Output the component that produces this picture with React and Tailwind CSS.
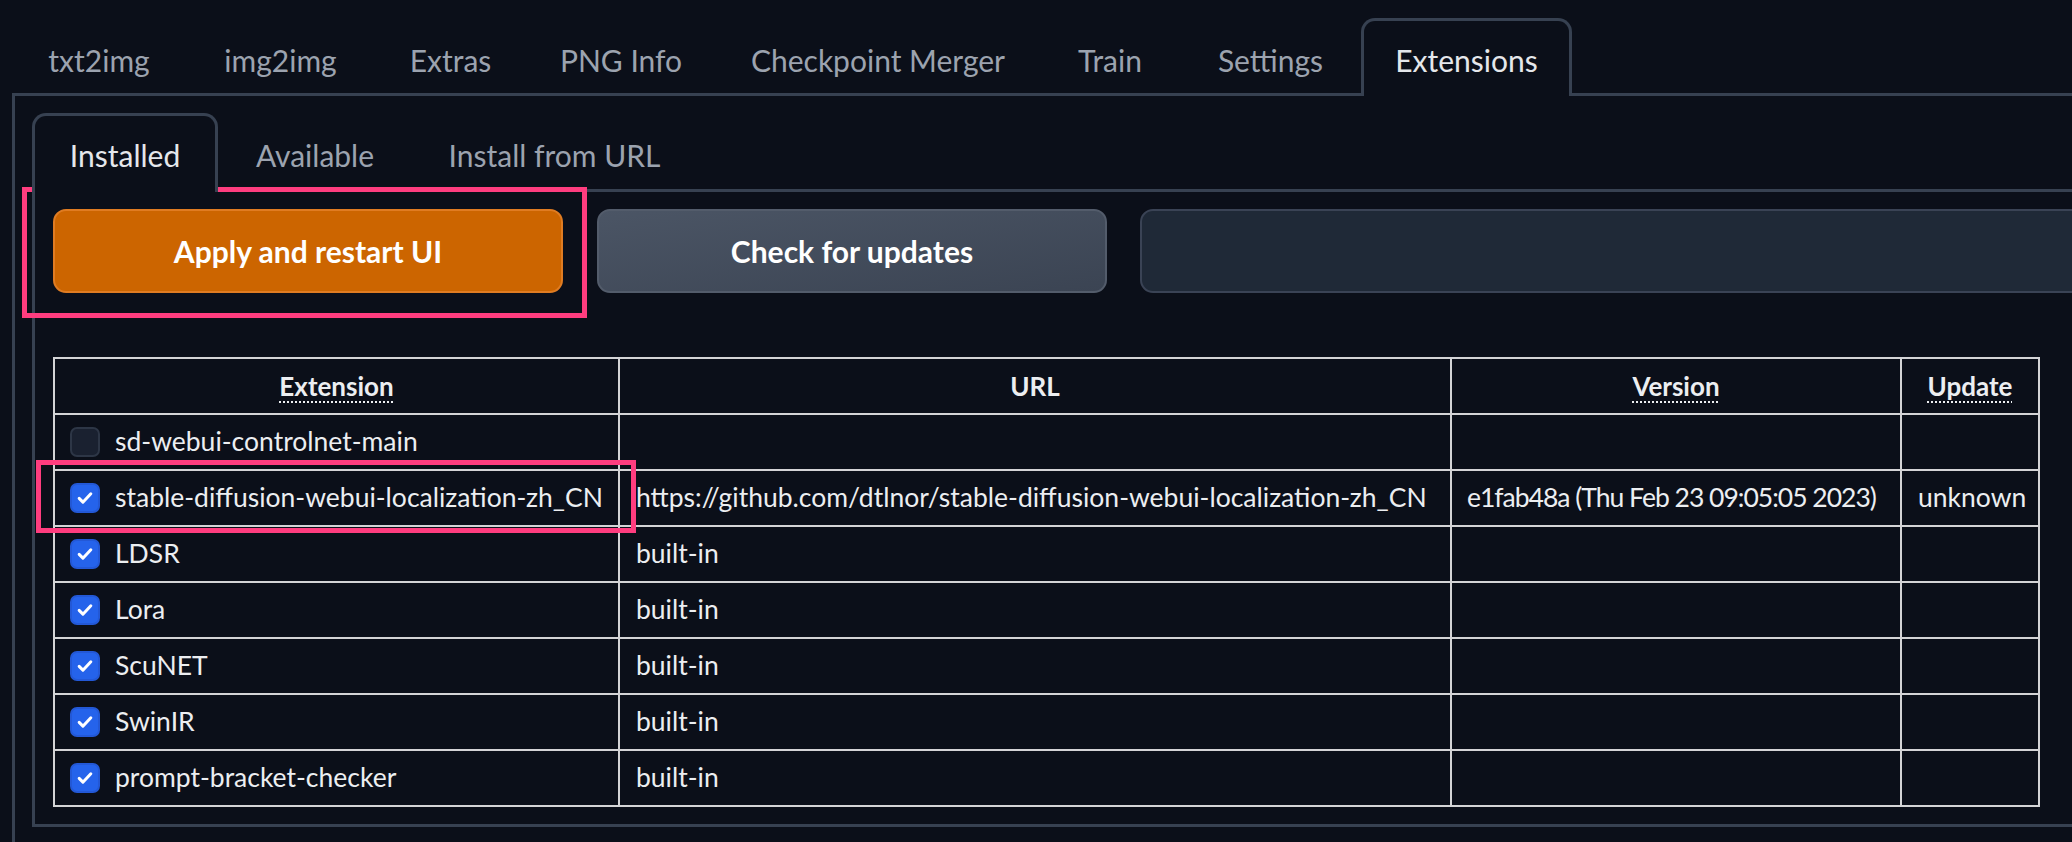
import clsx from "clsx";

const topTabs = [
  { label: "txt2img", w: "w-[174px]" },
  { label: "img2img", w: "w-[189px]" },
  { label: "Extras", w: "w-[151px]" },
  { label: "PNG Info", w: "w-[190px]" },
  { label: "Checkpoint Merger", w: "w-[324px]" },
  { label: "Train", w: "w-[140px]" },
  { label: "Settings", w: "w-[181px]" },
  { label: "Extensions", w: "w-[211px]", active: true },
];

const subTabs = [
  { label: "Installed", w: "w-[186px]", active: true },
  { label: "Available", w: "w-[194px]" },
  { label: "Install from URL", w: "w-[285px]" },
];

const rows = [
  { name: "sd-webui-controlnet-main", url: "", version: "", update: "", checked: false },
  {
    name: "stable-diffusion-webui-localization-zh_CN",
    url: "https://github.com/dtlnor/stable-diffusion-webui-localization-zh_CN",
    version: "e1fab48a (Thu Feb 23 09:05:05 2023)",
    update: "unknown",
    checked: true,
  },
  { name: "LDSR", url: "built-in", version: "", update: "", checked: true },
  { name: "Lora", url: "built-in", version: "", update: "", checked: true },
  { name: "ScuNET", url: "built-in", version: "", update: "", checked: true },
  { name: "SwinIR", url: "built-in", version: "", update: "", checked: true },
  { name: "prompt-bracket-checker", url: "built-in", version: "", update: "", checked: true },
];

function Checkbox({ checked }) {
  if (!checked) {
    return <span className="w-[30px] h-[30px] shrink-0 rounded-[7px] bg-[#1a2130] border-2 border-[#2d3646]" />;
  }
  return (
    <span className="w-[30px] h-[30px] shrink-0 rounded-[7px] bg-[#2563eb] border-2 border-[#2358d6] flex items-center justify-center">
      <svg viewBox="0 0 24 24" className="w-[20px] h-[20px]" fill="none" stroke="white" strokeWidth={3.6} strokeLinecap="round" strokeLinejoin="round">
        <path d="M5 12.5l4.5 4.5L19 7" />
      </svg>
    </span>
  );
}

function Tab({ label, w, active, h }) {
  return (
    <div
      className={clsx(
        "flex items-center justify-center border-[3px] border-b-0 rounded-t-[14px] text-[30px] pt-[3px]",
        w,
        h,
        active ? "border-[#374151] bg-[#0b0f19] text-[#e5e7eb]" : "border-transparent text-[#9ca3af]"
      )}
    >
      {label}
    </div>
  );
}

export default function App() {
  return (
    <div className="relative w-[2072px] h-[842px] overflow-hidden bg-[#0b0f19] font-[Lato,sans-serif] text-[#eceef1]">
      <div className="w-[2300px] pt-[18px] pl-[12px]">
        {/* top tabs */}
        <div className="relative z-10 flex">
          {topTabs.map((t) => (
            <Tab key={t.label} {...t} h="h-[78px]" />
          ))}
        </div>

        <div className="-mt-[3px] border-[3px] border-[#374151] pt-[17px] pl-[17px] pb-[40px]">
          {/* sub tabs */}
          <div className="relative z-10 flex">
            {subTabs.map((t) => (
              <Tab key={t.label} {...t} h="h-[79px]" />
            ))}
          </div>

          <div className="-mt-[3px] border-[3px] border-[#374151] pt-[17px] pl-[18px] pb-[17px]">
            {/* buttons row */}
            <div className="flex h-[84px]">
              <button className="w-[510px] rounded-[13px] bg-[#cc6500] border-2 border-[#e07c22] text-white font-bold text-[30px]">
                Apply and restart UI
              </button>
              <button className="ml-[34px] w-[510px] rounded-[13px] bg-gradient-to-br from-[#4b5565] to-[#3b4453] border-2 border-[#535c6b] text-white font-bold text-[30px]">
                Check for updates
              </button>
              <div className="ml-[33px] flex-1 rounded-[13px] bg-[#1f2937] border-2 border-[#3a4355]" />
            </div>

            {/* extensions table */}
            <table className="mt-[64px] w-[1985px] table-fixed border-collapse text-[26.5px]">
              <colgroup>
                <col className="w-[565px]" />
                <col className="w-[832px]" />
                <col className="w-[450px]" />
                <col className="w-[138px]" />
              </colgroup>
              <thead>
                <tr className="h-[56px] text-[26px]">
                  <th className="border-2 border-[#d4d4d6] font-bold">
                    <span className="underline decoration-dotted underline-offset-[6px] decoration-2">Extension</span>
                  </th>
                  <th className="border-2 border-[#d4d4d6] font-bold">URL</th>
                  <th className="border-2 border-[#d4d4d6] font-bold">
                    <span className="underline decoration-dotted underline-offset-[6px] decoration-2">Version</span>
                  </th>
                  <th className="border-2 border-[#d4d4d6] font-bold">
                    <span className="underline decoration-dotted underline-offset-[6px] decoration-2">Update</span>
                  </th>
                </tr>
              </thead>
              <tbody>
                {rows.map((r) => (
                  <tr key={r.name} className="h-[56px]">
                    <td className="border-2 border-[#d4d4d6] px-[15px]">
                      <div className="flex items-center gap-[15px] whitespace-nowrap">
                        <Checkbox checked={r.checked} />
                        <span>{r.name}</span>
                      </div>
                    </td>
                    <td className="border-2 border-[#d4d4d6] px-[16px] whitespace-nowrap">{r.url}</td>
                    <td className="border-2 border-[#d4d4d6] px-[15px] whitespace-nowrap tracking-[-1px]">{r.version}</td>
                    <td className="border-2 border-[#d4d4d6] px-[16px] whitespace-nowrap">{r.update}</td>
                  </tr>
                ))}
              </tbody>
            </table>
          </div>
        </div>
      </div>

      {/* annotation boxes */}
      <div className="absolute left-[22px] top-[187px] w-[565px] h-[131px] border-[5px] border-[#ff3d7f] pointer-events-none" />
      <div className="absolute left-[36px] top-[460px] w-[600px] h-[73px] border-[5px] border-[#ff3d7f] pointer-events-none" />
    </div>
  );
}
